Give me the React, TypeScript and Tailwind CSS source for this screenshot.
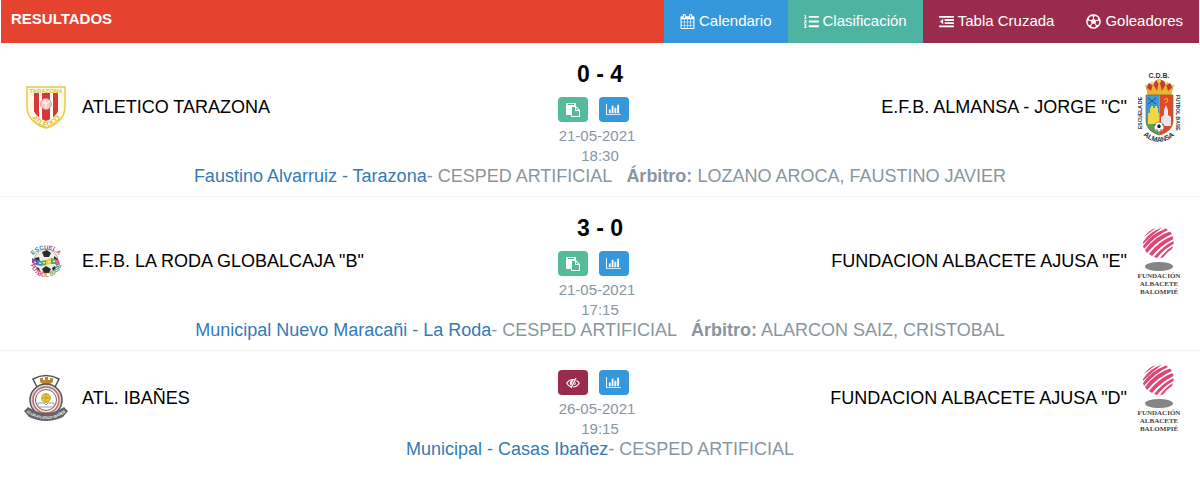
import type { ReactNode } from "react";
import { FaListOl, FaRegFutbol } from "react-icons/fa";

interface Match {
  home: string;
  away: string;
  homeCrest: ReactNode;
  awayCrest: ReactNode;
  score?: string;
  date: string;
  time: string;
  venue: string;
  surface: string;
  referee?: string;
}

function CalendarIcon() {
  return (
    <svg viewBox="0 0 1792 1792" className="size-[15px]" fill="currentColor" aria-hidden="true">
      <path d="M192 1664h288v-288h-288v288zm352 0h320v-288h-320v288zm-352-352h288v-320h-288v320zm352 0h320v-320h-320v320zm-352-384h288v-288h-288v288zm736 736h320v-288h-320v288zm-384-736h320v-288h-320v288zm768 736h288v-288h-288v288zm-384-352h320v-320h-320v320zm-352-864v-288q0-13-9.5-22.5t-22.5-9.5h-64q-13 0-22.5 9.5t-9.5 22.5v288q0 13 9.5 22.5t22.5 9.5h64q13 0 22.5-9.5t9.5-22.5zm736 864h288v-320h-288v320zm-384-384h320v-288h-320v288zm384 0h288v-288h-288v288zm32-480v-288q0-13-9.5-22.5t-22.5-9.5h-64q-13 0-22.5 9.5t-9.5 22.5v288q0 13 9.5 22.5t22.5 9.5h64q13 0 22.5-9.5t9.5-22.5zm384-64v1280q0 52-38 90t-90 38h-1408q-52 0-90-38t-38-90v-1280q0-52 38-90t90-38h128v-96q0-66 47-113t113-47h64q66 0 113 47t47 113v96h384v-96q0-66 47-113t113-47h64q66 0 113 47t47 113v96h128q52 0 90 38t38 90z" />
    </svg>
  );
}

function OutdentIcon() {
  return (
    <svg viewBox="0 0 16 14" className="h-[13px] w-[15px]" fill="currentColor" aria-hidden="true">
      <path d="M0 1h16v2H0zM6 4.4h10v2H6zM6 7.8h10v2H6zM0 11.2h16v2H0zM4.4 4v6L1 7z" />
    </svg>
  );
}

function PasteIcon() {
  return (
    <svg viewBox="0 0 1792 1792" className="size-[14px]" fill="currentColor" aria-hidden="true">
      <path d="M768 1664h896v-640h-416q-40 0-68-28t-28-68v-416h-384v1152zm256-1440v-64q0-13-9.5-22.5t-22.5-9.5h-704q-13 0-22.5 9.5t-9.5 22.5v64q0 13 9.5 22.5t22.5 9.5h704q13 0 22.5-9.5t9.5-22.5zm256 672h299l-299-299v299zm512 128v672q0 40-28 68t-68 28h-960q-40 0-68-28t-28-68v-160h-544q-40 0-68-28t-28-68v-1344q0-40 28-68t68-28h1088q40 0 68 28t28 68v328q21 13 36 28l408 408q28 28 48 76t20 88z" />
    </svg>
  );
}

function ChartIcon() {
  return (
    <svg viewBox="0 0 2048 1792" className="h-[13px] w-[15px]" fill="currentColor" aria-hidden="true">
      <path d="M640 896v512h-256v-512h256zm384-512v1024h-256v-1024h256zm1024 1152v128h-2048v-1536h128v1408h1920zm-640-896v768h-256v-768h256zm384-384v1152h-256v-1152h256z" />
    </svg>
  );
}

function EyeSlashIcon() {
  return (
    <svg viewBox="0 0 28 24" className="h-[12px] w-[14px]" fill="none" stroke="currentColor" strokeWidth="2.2" aria-hidden="true">
      <path d="M10 19.5C6.5 18.5 3.5 16 1.5 12.5C4.5 7.5 9 5 14 5l3 .3" />
      <path d="M21 7c2 1.2 4 3 5.5 5.5C23.5 17.5 19 20 14 20" />
      <path d="M20 2L10 22" strokeWidth="2.6" />
      <path d="M7.5 12c0-4 2.5-6 7-6L10.500 17c-2-1-3-3-3-5z" fill="currentColor" stroke="none" />
      <path d="M19 9c1.5 3.5 0 6.8-3 8.2z" fill="currentColor" stroke="none" />
    </svg>
  );
}

function TarazonaCrest() {
  return (
    <svg viewBox="0 0 40 43" className="h-[43px] w-[40px]" role="img" aria-label="Escudo Atletico Tarazona">
      <defs>
        <path id="tarazona-arc" d="M2 25Q7 38 20 41Q33 38 38 25" />
        <clipPath id="tarazona-clip">
          <path d="M7 7h26v13c0 7-5 12-13 15C12 32 7 27 7 20z" />
        </clipPath>
      </defs>
      <path d="M1 1h38v20c0 10-8 18-19 21C9 39 1 31 1 21z" fill="#fffbe6" stroke="#e6cb52" strokeWidth="1.5" />
      <g clipPath="url(#tarazona-clip)">
        <path d="M7 7h26v30H7z" fill="#fff" />
        <path d="M8 7h5v30H8zM16 7h8v30h-8zM27 7h5v30h-5z" fill="#d93636" />
      </g>
      <circle cx="20" cy="18" r="5.5" fill="#f3c9c5" stroke="#d98883" strokeWidth=".8" />
      <path d="M16 16l4 2 4-3M20 18v5M18 13l2 5" stroke="#fff" fill="none" />
      <text x="20" y="6.5" textAnchor="middle" fontSize="6" fontWeight="bold" fill="#dfc13a">TARAZONA</text>
      <text fontSize="7" fontWeight="bold" fill="#dfbd2f">
        <textPath href="#tarazona-arc" startOffset="50%" textAnchor="middle">ATLETICO</textPath>
      </text>
    </svg>
  );
}

function AlmansaCrest() {
  return (
    <svg viewBox="0 0 44 74" className="h-[74px] w-[44px]" role="img" aria-label="Escudo E.F.B. Almansa">
      <defs>
        <path id="almansa-arc" d="M5 64Q22 80 39 64" />
        <clipPath id="almansa-shield">
          <path d="M9 25h27v26c0 7-6 12-13.5 14C15 63 9 58 9 51z" />
        </clipPath>
      </defs>
      <text x="22" y="8" textAnchor="middle" fontSize="7" fontWeight="bold" fill="#333">C.D.B.</text>
      <path d="M11 25l-2-8 3-4 4 2 2-4 4-2 5 2 2 4 4-2 3 4-2 8z" fill="#c83b2f" />
      <path d="M11 25l-2-8 5 4 2-7 4 7 2-11 3 11 4-7 2 7 5-4-2 8z" fill="#e8b532" />
      <g fill="#f4d152">
        <circle cx="9" cy="16" r="1.5" />
        <circle cx="15" cy="13" r="1.5" />
        <circle cx="22" cy="11" r="2" />
        <circle cx="30" cy="13" r="1.5" />
        <circle cx="36" cy="16" r="1.5" />
      </g>
      <g clipPath="url(#almansa-shield)">
        <path d="M9 25h13.5v41H9z" fill="#3c97dc" />
        <path d="M22.5 25H36v41H22.5z" fill="#e04a29" />
        <path d="M9 53h13.5v12H9z" fill="#5f9e55" />
        <path d="M11 54V43h2v-5h1v-2h2v2h2v-2h2v2h1v5h1v11z" fill="#f0d840" />
        <path d="M24 56V47l3-2v-5l2-5 2 5v5l3 2v9z" fill="#e9e6ee" />
        <path d="M11 28l8 6M19 28l-8 6" stroke="#28527a" fill="none" />
        <path d="M27 30l3-2 1 3-3 2" stroke="#f2b53a" fill="none" />
      </g>
      <path d="M9 25h27v26c0 7-6 12-13.5 14C15 63 9 58 9 51z" fill="none" stroke="#80612f" strokeWidth=".7" />
      <circle cx="22" cy="57" r="5" fill="#fff" stroke="#555" strokeWidth=".6" />
      <path d="M20 56l2-2 2 2-1 2h-2zM17 56l1-2 1 1zM27 56l-1-2-1 1zM20 61l-1-2 2 1zM24 61l1-2-2 1z" fill="#222" />
      <text transform="translate(5 59) rotate(-90)" fontSize="5" fontWeight="bold" fill="#333">ESCUELA DE</text>
      <text transform="translate(39 25) rotate(90)" fontSize="5" fontWeight="bold" fill="#333">FUTBOL BASE</text>
      <text fontSize="7" fontWeight="bold" fill="#333">
        <textPath href="#almansa-arc" startOffset="50%" textAnchor="middle">ALMANSA</textPath>
      </text>
    </svg>
  );
}

function LaRodaCrest() {
  return (
    <svg viewBox="0 0 34 34" className="size-[34px]" role="img" aria-label="Escudo E.F.B. La Roda">
      <defs>
        <path id="roda-top" d="M4 13C6 3 28 3 30 13" />
        <path id="roda-bottom" d="M1 18C4 38 30 38 33 18" />
        <linearGradient id="roda-top-fill">
          <stop offset="0" stopColor="#3ba564" />
          <stop offset=".35" stopColor="#1976bd" />
          <stop offset=".7" stopColor="#c23a79" />
          <stop offset="1" stopColor="#e67d22" />
        </linearGradient>
        <linearGradient id="roda-bottom-fill">
          <stop offset="0" stopColor="#8e44ad" />
          <stop offset=".3" stopColor="#d9366d" />
          <stop offset=".55" stopColor="#e59b21" />
          <stop offset=".8" stopColor="#41a855" />
          <stop offset="1" stopColor="#2585c7" />
        </linearGradient>
      </defs>
      <circle cx="17" cy="17" r="12" fill="#ececec" stroke="#999" strokeWidth=".8" />
      <path d="M13 8l5-2 4 3-2 4h-5zM6 14l4-1 1 5-3 3-2-3zM25 12l4 3-1 6-3-2zM13 25l4-3 5 3-2 4h-5zM7 23l3 1 1 3-2-1zM26 22l1 2-3 3-1-3z" fill="#2c2c2c" />
      <path d="M3 14l5 2v5l-5-2z" fill="#7d52a3" />
      <path d="M8 16l4 1v5l-4-1z" fill="#2f8fc9" />
      <path d="M12 17l5-1v5l-5 1z" fill="#56aa63" />
      <path d="M17 16l5-2v6l-5 1z" fill="#e5cf38" />
      <path d="M22 14l4 1v5h-4z" fill="#56aa63" />
      <path d="M26 15l4 1 1 5-5-1z" fill="#df5c9b" />
      <path d="M5 18l2 .5M10 19l2 .3M14 19l2-.3M19 18l2-.5M24 17l2 .3" stroke="#fff" strokeWidth="1.2" />
      <text fontSize="6" fontWeight="bold" fill="url(#roda-top-fill)">
        <textPath href="#roda-top" startOffset="50%" textAnchor="middle">ESCUELA</textPath>
      </text>
      <text fontSize="6" fontWeight="bold" fill="url(#roda-bottom-fill)">
        <textPath href="#roda-bottom" startOffset="50%" textAnchor="middle">FUTBOL BASE</textPath>
      </text>
    </svg>
  );
}

function IbanesCrest() {
  return (
    <svg viewBox="0 0 44 47" className="h-[47px] w-[44px]" role="img" aria-label="Escudo Atl. Ibañes">
      <defs>
        <path id="ibanes-arc" d="M1 37Q22 53 43 37" />
      </defs>
      <path d="M13 13L9 5Q22-2 35 5l-4 8" fill="#fff" stroke="#555" strokeWidth="1.5" />
      <path d="M16 4h3v2h2V3h3v3h2V4h3v4l-3 2v2h-7v-2l-3-2z" fill="#b88635" />
      <circle cx="22" cy="26" r="16" fill="#d9d9d9" stroke="#555" strokeWidth="1.5" />
      <circle cx="22" cy="26" r="13" fill="#f5f5f5" stroke="#c96366" strokeWidth="1.5" />
      <circle cx="22" cy="26" r="10.5" fill="#fff" stroke="#666" />
      <circle cx="22" cy="24" r="4.5" fill="#e9c72f" stroke="#94802a" strokeWidth=".6" />
      <path d="M18 24h8M22 20v8" stroke="#a38722" strokeWidth=".6" />
      <path d="M14 29h6l2 2 2-2h6v4H14z" fill="#fff" stroke="#777" strokeWidth=".7" />
      <path d="M0 37l4-4Q22 45 40 33l4 4-5 6Q22 51 5 43z" fill="#666" />
      <text fontSize="3.5" fontWeight="bold" fill="#fff">
        <textPath href="#ibanes-arc" startOffset="50%" textAnchor="middle">CLUB ATLETICO IBAÑES</textPath>
      </text>
    </svg>
  );
}

function AlbaceteCrest() {
  return (
    <svg viewBox="0 0 44 68" className="h-[68px] w-[44px]" role="img" aria-label="Escudo Fundación Albacete Balompié">
      <g fill="#dc4775">
        <path d="M7 10Q12 3 19 1Q12 6 7 10z" />
        <path d="M6 15Q12 5 25 .5Q14 9 6 17z" />
        <path d="M6 19Q14 7 29 1.5L31 3Q18 9 7 22z" />
        <path d="M8 23Q18 9 33 4.5L35 7Q21 13 10 26z" />
        <path d="M12 27Q22 14 35.5 9L36.5 12Q24 18 15 29z" />
        <path d="M17 30Q26 19 36.5 14V17Q27 22 20 31z" />
        <path d="M23 31Q29 23 36 19L35 22Q30 25 26 30.5z" />
      </g>
      <ellipse cx="22" cy="39.5" rx="14" ry="4.5" fill="#858585" />
      <g fontFamily="Liberation Serif, serif" fontSize="7" fontWeight="bold" fill="#444" textAnchor="middle">
        <text x="22" y="51">FUNDACIÓN</text>
        <text x="22" y="59">ALBACETE</text>
        <text x="22" y="67">BALOMPIÉ</text>
      </g>
    </svg>
  );
}

const matches: Match[] = [
  {
    home: "ATLETICO TARAZONA",
    away: 'E.F.B. ALMANSA - JORGE "C"',
    homeCrest: <TarazonaCrest />,
    awayCrest: <AlmansaCrest />,
    score: "0 - 4",
    date: "21-05-2021",
    time: "18:30",
    venue: "Faustino Alvarruiz - Tarazona",
    surface: "CESPED ARTIFICIAL",
    referee: "LOZANO AROCA, FAUSTINO JAVIER",
  },
  {
    home: 'E.F.B. LA RODA GLOBALCAJA "B"',
    away: 'FUNDACION ALBACETE AJUSA "E"',
    homeCrest: <LaRodaCrest />,
    awayCrest: <AlbaceteCrest />,
    score: "3 - 0",
    date: "21-05-2021",
    time: "17:15",
    venue: "Municipal Nuevo Maracañi - La Roda",
    surface: "CESPED ARTIFICIAL",
    referee: "ALARCON SAIZ, CRISTOBAL",
  },
  {
    home: "ATL. IBAÑES",
    away: 'FUNDACION ALBACETE AJUSA "D"',
    homeCrest: <IbanesCrest />,
    awayCrest: <AlbaceteCrest />,
    date: "26-05-2021",
    time: "19:15",
    venue: "Municipal - Casas Ibañez",
    surface: "CESPED ARTIFICIAL",
  },
];

function MatchRow({ match }: { match: Match }) {
  const played = Boolean(match.score);

  return (
    <li className="border-b border-[#f3f3f3] pt-[5px] pb-[10px] last:border-b-0">
      <div className="grid grid-cols-[1fr_100px_1fr] items-center">
        <div className="flex items-center gap-[14px] pl-6">
          <div className="flex w-[44px] shrink-0 justify-center">{match.homeCrest}</div>
          <span className="text-[18px] leading-6 text-black">{match.home}</span>
        </div>

        <div className="flex flex-col items-center">
          {match.score && (
            <strong className="pt-[11px] text-[23px] leading-[30px] font-bold whitespace-nowrap text-black">
              {match.score}
            </strong>
          )}
          <div className={played ? "flex gap-[11px] pt-2 pr-[14px]" : "flex gap-[11px] pt-[14px] pr-[14px]"}>
            {played ? (
              <button type="button" aria-label="Acta" className="flex h-[25px] w-[30px] items-center justify-center rounded-[4px] bg-[#55bc98] text-white">
                <PasteIcon />
              </button>
            ) : (
              <button type="button" aria-label="Acta no disponible" className="flex h-[25px] w-[30px] items-center justify-center rounded-[4px] bg-[#992c4c] text-white">
                <EyeSlashIcon />
              </button>
            )}
            <button type="button" aria-label="Estadísticas" className="flex h-[25px] w-[30px] items-center justify-center rounded-[4px] bg-[#3598dc] text-white">
              <ChartIcon />
            </button>
          </div>
          <div className="pt-1 text-center text-[15px] leading-5 whitespace-nowrap text-[#8896a0]">
            <div className="pr-[6px]">{match.date}</div>
            <div>{match.time}</div>
          </div>
        </div>

        <div className="flex items-center justify-end gap-[10px] pr-[19px]">
          <span className="text-[18px] leading-6 text-black">{match.away}</span>
          <div className="flex w-[44px] shrink-0 justify-center">{match.awayCrest}</div>
        </div>
      </div>

      <div className="text-center text-[18px] leading-5 text-[#8896a0]">
        <a href="#" className="text-[#337ab7]">{match.venue}</a>- {match.surface}
        {match.referee && (
          <span className="ml-[14px]">
            <b>Árbitro:</b> {match.referee}
          </span>
        )}
      </div>
    </li>
  );
}

export default function App() {
  return (
    <main className="bg-white font-['Liberation_Sans',Arial,sans-serif]">
      <header className="mx-px flex h-[43px] bg-[#e5432f] text-[15px] text-white">
        <h1 className="grow pt-2 pl-[10px] leading-[22px] font-bold">RESULTADOS</h1>
        <nav className="flex">
          <a href="#" className="flex items-center gap-1 bg-[#3598dc] px-4">
            <CalendarIcon />
            Calendario
          </a>
          <a href="#" className="flex items-center gap-1 bg-[#4fb3a1] px-4">
            <FaListOl className="size-[15px]" />
            Clasificación
          </a>
          <a href="#" className="flex items-center gap-1 bg-[#992c4c] px-4">
            <OutdentIcon />
            Tabla Cruzada
          </a>
          <a href="#" className="flex items-center gap-1 bg-[#992c4c] px-4">
            <FaRegFutbol className="size-[15px]" />
            Goleadores
          </a>
        </nav>
      </header>

      <ul>
        {matches.map((match) => (
          <MatchRow key={match.home} match={match} />
        ))}
      </ul>
    </main>
  );
}
